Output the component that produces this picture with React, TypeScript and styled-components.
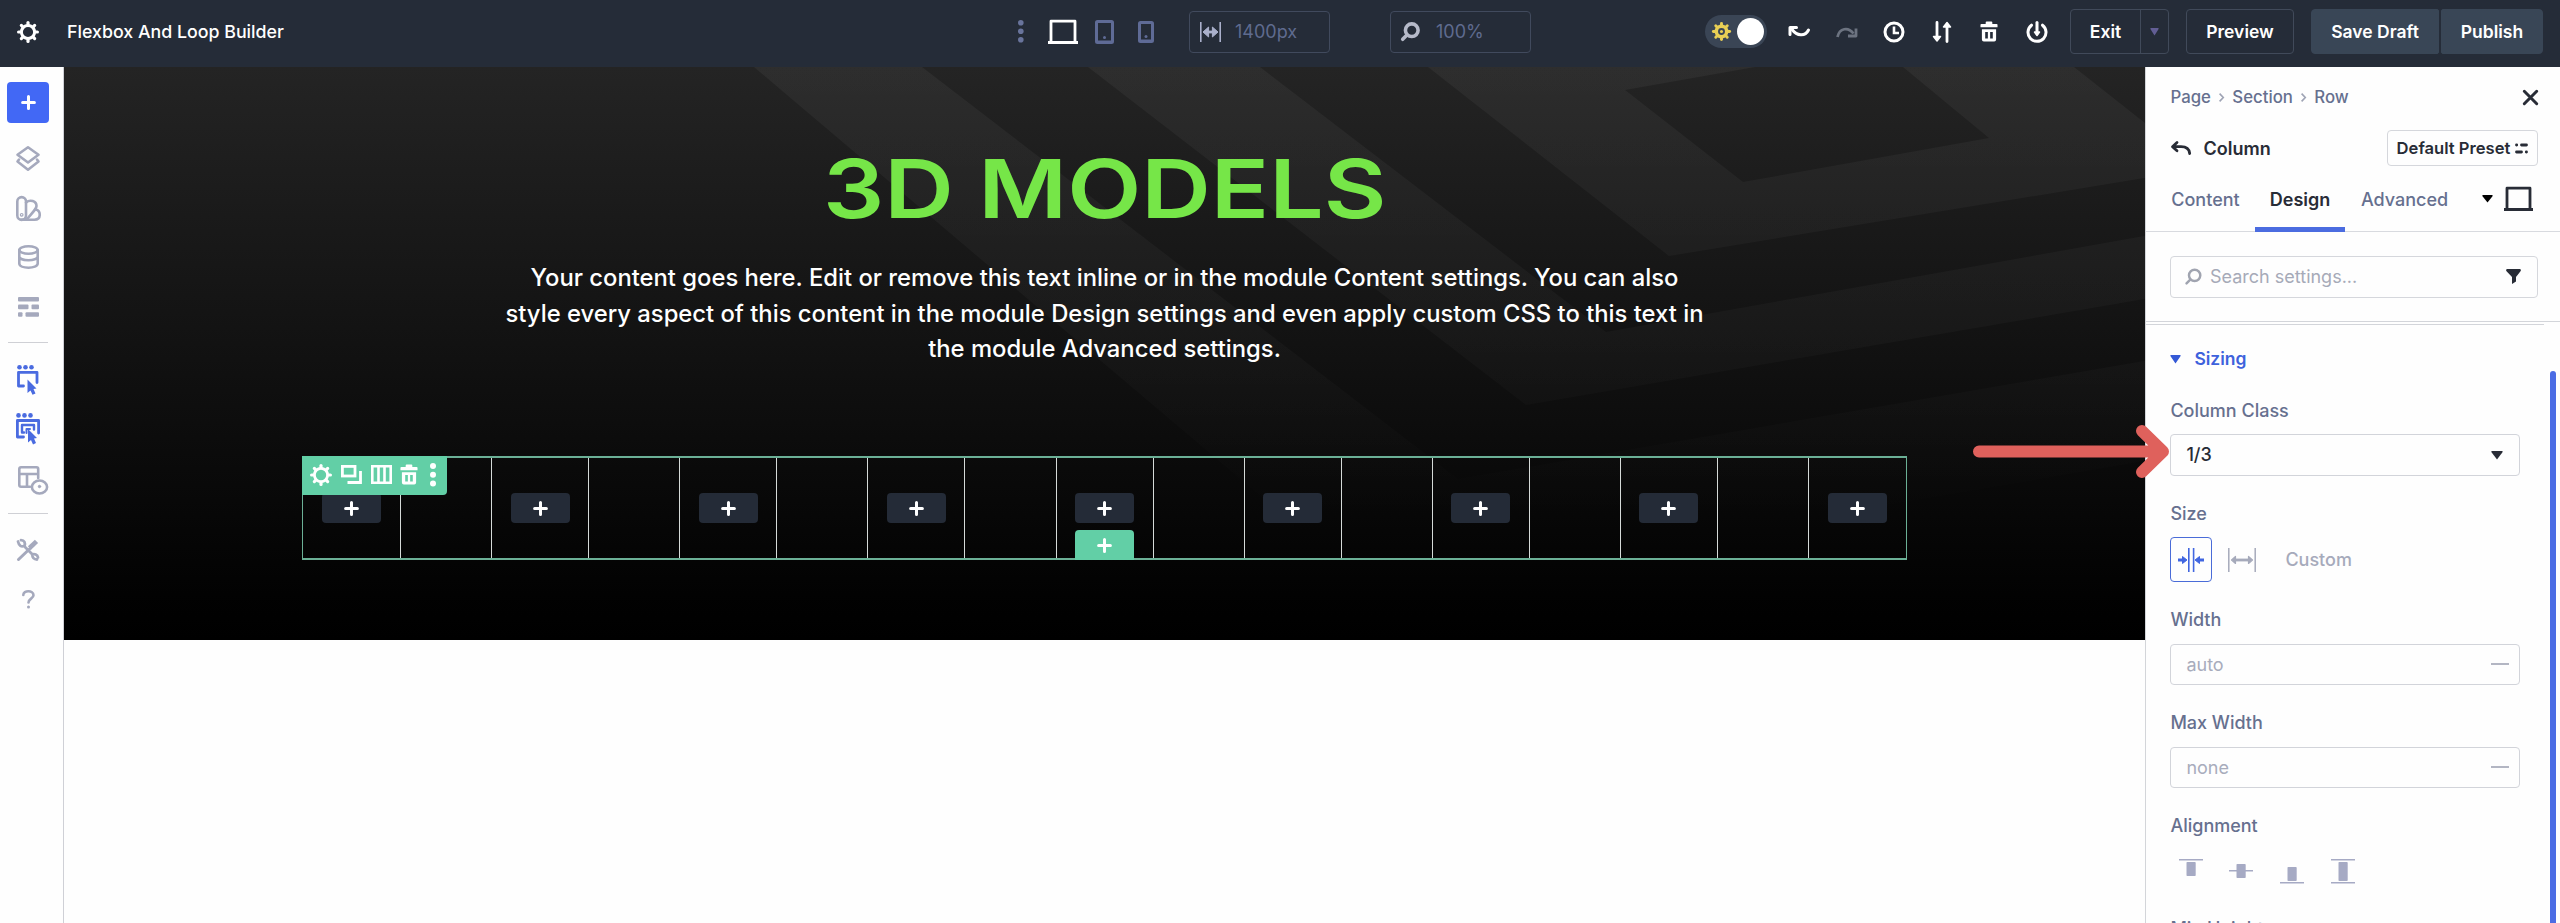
import React from "react";
import styled, { createGlobalStyle } from "styled-components";

const GlobalStyle = createGlobalStyle`
  * { box-sizing: border-box; }
  body { margin: 0; background: #fefefe; overflow: hidden; }
  #root { font-family: Inter, "Liberation Sans", sans-serif; }
  svg { display: block; flex: none; overflow: visible; }
  button { font: inherit; margin: 0; padding: 0; border: 0; background: none; }
`;

/* ---------- shell ---------- */
const Shell = styled.div`
  position: relative;
  width: 2560px;
  height: 923px;
  display: flex;
  flex-direction: column;
  overflow: hidden;
`;
const Header = styled.header`
  height: 67px;
  flex: none;
  display: flex;
  align-items: center;
  padding: 0 16px 4px 17px;
  background: #252c38;
  color: #fff;
  font-size: 18px;
  font-weight: 500;
`;
const Body = styled.div`
  flex: 1;
  min-height: 0;
  display: flex;
`;
const Spacer = styled.span<{ $w: number }>`
  flex: none;
  width: ${(p) => p.$w}px;
`;

/* ---------- header ---------- */
const HeaderLeft = styled.div`
  width: 1001px;
  display: flex;
  align-items: center;
  gap: 28px;
`;
const Title = styled.span<{ $size: number }>`
  font-size: ${(p) => p.$size}px;
`;
const Devices = styled.div`
  display: flex;
  align-items: center;
  width: 171px;
`;
const ValueBox = styled.div<{ $gap?: number }>`
  width: 141px;
  height: 42px;
  border: 1.5px solid #414a5d;
  border-radius: 4px;
  display: flex;
  align-items: center;
  gap: ${(p) => p.$gap ?? 14}px;
  padding-left: 10px;
  font-size: 18px;
  font-weight: 400;
  color: #5f6b8f;
`;
const Toggle = styled.div`
  width: 62px;
  height: 33px;
  border-radius: 17px;
  background: #3a4555;
  display: flex;
  align-items: center;
  justify-content: space-between;
  padding: 0 3px 0 7px;
`;
const Knob = styled.span`
  width: 27px;
  height: 27px;
  border-radius: 50%;
  background: #fff;
`;
const Actions = styled.div`
  display: grid;
  grid-template-columns: repeat(6, 22px);
  align-items: center;
  justify-items: center;
  justify-content: space-between;
  width: 260px;
  margin: 0 22px 0 21px;
`;
const SplitButton = styled.div`
  display: flex;
  width: 99px;
  height: 45px;
  border: 1.5px solid #414a5a;
  border-radius: 4px;
`;
const SplitMain = styled.button`
  flex: 1;
  color: #fff;
  font-weight: 600;
  font-size: 17.5px;
  border-right: 1.5px solid #414a5a;
`;
const SplitCaret = styled.button`
  width: 27px;
  display: grid;
  place-items: center;
`;
const HeaderButton = styled.button<{ $w: number; $filled?: boolean; $round: string }>`
  width: ${(p) => p.$w}px;
  height: 45px;
  color: #fff;
  font-size: 17.5px;
  font-weight: 600;
  border-radius: ${(p) => p.$round};
  border: 1.5px solid ${(p) => (p.$filled ? "#394656" : "#414a5a")};
  background: ${(p) => (p.$filled ? "#394656" : "transparent")};
`;

/* ---------- sidebar ---------- */
const Sidebar = styled.nav`
  width: 64px;
  border-right: 1.5px solid #cfd0d6;
  background: #fefefe;
  display: flex;
  flex-direction: column;
  align-items: center;
  padding: 15px 7px 0 0;
  color: #a5a9bd;
`;
const AddButton = styled.button`
  width: 42px;
  height: 41px;
  border-radius: 4px;
  background: #4268f5;
  color: #fff;
  display: grid;
  place-items: center;
  margin-bottom: 11px;
`;
const NavItem = styled.button<{ $active?: boolean; $h?: number }>`
  width: 42px;
  height: ${(p) => p.$h ?? 49.4}px;
  display: grid;
  place-items: center;
  color: ${(p) => (p.$active ? "#4a6be0" : "#a5a9bd")};
`;
const NavRule = styled.hr<{ $top?: number }>`
  width: 40px;
  height: 1.5px;
  border: 0;
  margin: ${(p) => p.$top ?? 9}px 0 12px;
  background: #cfd0d5;
`;

/* ---------- canvas ---------- */
const Canvas = styled.main`
  width: 2081px;
  background: #fefefe;
`;
const Hero = styled.section`
  position: relative;
  height: 573px;
  background: linear-gradient(#242424, #1a1a1a 26%, #0d0d0d 62%, #020202 92%, #000);
  color: #fff;
  display: flex;
  flex-direction: column;
  align-items: center;
`;
const HeroPattern = styled.svg`
  position: absolute;
  inset: 0;
`;
const HeroTitle = styled.h1`
  position: relative;
  margin: 77px 0 0;
  height: 90px;
  line-height: 90px;
  font-size: 81px;
  font-weight: 600;
  white-space: nowrap;
  color: #76e648;
  transform: scaleX(1.19);
`;
const HeroText = styled.p`
  position: relative;
  margin: 26px 0 0;
  font-size: 23.8px;
  line-height: 35.7px;
  text-align: center;
  font-weight: 500;
  white-space: nowrap;
`;
const TextLine = styled.span`
  display: block;
`;
const RowFrame = styled.div`
  position: relative;
  width: 1605px;
  height: 104px;
  margin-top: 89px;
  border: solid #6bb096;
  border-width: 2px 1px;
  display: flex;
  justify-content: space-between;
`;
const Column = styled.div`
  position: relative;
  width: 98px;
  border: solid #d5dad8;
  border-width: 0 1.5px;
  display: flex;
  flex-direction: column;
  align-items: center;
  padding-top: 35px;
  gap: 7px;
  &:first-child { border-left: 0; }
  &:nth-child(9) { border-right: 0; }
`;
const AddModule = styled.button`
  width: 59px;
  height: 30px;
  flex: none;
  border-radius: 4px;
  background: #242b37;
  display: grid;
  place-items: center;
`;
const AddRow = styled(AddModule)`
  background: #62cfa6;
  border-radius: 4px 4px 0 0;
`;
const RowTools = styled.div`
  position: absolute;
  z-index: 1;
  left: -1px;
  top: -2px;
  width: 145px;
  height: 39px;
  padding: 0 11px 2px 8px;
  border-radius: 0 0 4px 0;
  background: #62cfa6;
  display: flex;
  align-items: center;
  gap: 8.8px;
`;

/* ---------- settings panel ---------- */
const Panel = styled.aside`
  width: 415px;
  border-left: 1.5px solid #d3d5d9;
  background: #fefefe;
  font-size: 18px;
  font-weight: 500;
  color: #66708f;
  display: flex;
  flex-direction: column;
`;
const Crumbs = styled.div`
  display: flex;
  align-items: center;
  height: 24px;
  margin: 18px 22px 0 24.5px;
  font-size: 16.8px;
  gap: 8.2px;
`;
const Push = styled.span`
  margin-left: auto;
`;
const TitleRow = styled.div`
  display: flex;
  align-items: center;
  height: 36px;
  margin: 21px 22px 0 24.5px;
  gap: 13px;
  color: #282c36;
  font-size: 18px;
  font-weight: 600;
`;
const PresetButton = styled.button`
  margin-left: auto;
  width: 151px;
  height: 36px;
  border: 1.5px solid #d5d7dc;
  border-radius: 4px;
  display: flex;
  align-items: center;
  justify-content: center;
  gap: 5px;
  color: #282c36;
  font-size: 16.6px;
`;
const Tabs = styled.div`
  display: flex;
  height: 65.5px;
  border-bottom: 1.5px solid #d8dadf;
  padding-left: 10px;
  font-size: 18px;
`;
const Tab = styled.button<{ $w: number; $active?: boolean }>`
  width: ${(p) => p.$w}px;
  height: 66px;
  padding-top: ${(p) => (p.$active ? 6 : 1)}px;
  border-bottom: ${(p) => (p.$active ? "5px solid #4b6ce0" : "0")};
  color: ${(p) => (p.$active ? "#282c36" : "#66708f")};
  font-weight: ${(p) => (p.$active ? 600 : 500)};
`;
const TabDevice = styled.div`
  display: flex;
  align-items: center;
  gap: 11px;
  margin-left: auto;
  padding: 1px 27px 0 0;
`;
const SearchBox = styled.div`
  height: 42px;
  margin: 24px 22px 23px 24px;
  border: 1.5px solid #d5d7dc;
  border-radius: 4px;
  display: flex;
  align-items: center;
  padding: 0 16px 0 14px;
  gap: 8px;
  color: #a6aab8;
  font-size: 18px;
  font-weight: 400;
`;
const Scroll = styled.div`
  position: relative;
  flex: 1;
  min-height: 0;
  overflow: hidden;
  border-top: 1.5px solid #d3d5da;
`;
const ScrollThumb = styled.div`
  position: absolute;
  right: 4px;
  top: 49px;
  bottom: -6px;
  width: 6px;
  border-radius: 3px;
  background: #4b6ce4;
`;
const Group = styled.div`
  margin-top: 2px;
  width: 398px;
  border-top: 1.5px solid #d3d5da;
  padding: 20px 0 0 24.4px;
`;
const GroupTitle = styled.div`
  display: flex;
  align-items: center;
  gap: 13px;
  height: 28px;
  color: #3e62dc;
  font-weight: 600;
  font-size: 17.5px;
`;
const Field = styled.div<{ $top?: number }>`
  margin-top: ${(p) => p.$top ?? 26}px;
`;
const Label = styled.div`
  height: 24px;
  line-height: 24px;
  font-size: 18px;
`;
const Input = styled.div<{ $dark?: boolean }>`
  width: 350px;
  height: 41.5px;
  margin-top: 11.5px;
  border: 1.5px solid #d2d4da;
  border-radius: 4px;
  display: flex;
  align-items: center;
  justify-content: space-between;
  padding: 0 ${(p) => (p.$dark ? 16 : 10)}px 0 15px;
  color: ${(p) => (p.$dark ? "#282c36" : "#a8acbc")};
  font-size: 18px;
  font-weight: ${(p) => (p.$dark ? 500 : 400)};
`;
const Dash = styled.span`
  width: 18px;
  height: 2px;
  background: #b3b6c3;
`;
const SizeOptions = styled.div`
  display: flex;
  align-items: center;
  height: 45px;
  margin-top: 11.5px;
  color: #a6aabb;
`;
const SizeOption = styled.button<{ $active?: boolean }>`
  width: 42px;
  height: 45px;
  border: ${(p) => (p.$active ? "1.5px solid #4a6cd8" : "0")};
  border-radius: 4px;
  display: grid;
  place-items: center;
  color: ${(p) => (p.$active ? "#4166e0" : "#a6aabb")};
`;
const AlignOptions = styled.div`
  display: flex;
  gap: 26.6px;
  margin: 20.5px 0 0 8.5px;
`;
const ArrowOverlay = styled.svg`
  position: absolute;
  left: 1969px;
  top: 420px;
  pointer-events: none;
`;

/* ---------- icons ---------- */
const Gear = ({ size = 22, color = "#fff", w = 3 }: { size?: number; color?: string; w?: number }) => (
  <svg width={size} height={size} viewBox="-11 -11 22 22" fill="none" stroke={color}>
    <circle r="6.6" strokeWidth={w} />
    {[0, 45, 90, 135, 180, 225, 270, 315].map((a) => (
      <path key={a} d="M0-7.4V-9.4" strokeWidth="3.2" strokeLinecap="round" transform={`rotate(${a})`} />
    ))}
  </svg>
);
const Sun = () => (
  <svg width="19" height="19" viewBox="-11 -11 22 22" fill="none" stroke="#e9cf55">
    <circle r="6" strokeWidth="4" />
    <circle r="1.800" fill="#e9cf55" stroke="none" />
    {[0, 45, 90, 135, 180, 225, 270, 315].map((a) => (
      <path key={a} d="M0-7.4V-9.4" strokeWidth="3.4" strokeLinecap="round" transform={`rotate(${a})`} />
    ))}
  </svg>
);
const Plus = ({ s = 15 }: { s?: number }) => (
  <svg width={s} height={s} viewBox="0 0 15 15" stroke="#fff" strokeWidth="3" strokeLinecap="round">
    <path d="M7.5 1.6v11.8M1.6 7.5h11.8" />
  </svg>
);
const Dots = ({ color, r = 2.8, gap = 8.5 }: { color: string; r?: number; gap?: number }) => (
  <svg width={2 * r} height={2 * (gap + r)} fill={color}>
    {[0, 1, 2].map((i) => (
      <circle key={i} cx={r} cy={r + i * gap} r={r} />
    ))}
  </svg>
);
const Laptop = ({ color, w = 30, h = 25 }: { color: string; w?: number; h?: number }) => (
  <svg width={w} height={h} fill="none" stroke={color}>
    <path d={`M3 ${h - 2}V2.2H${w - 3}V${h - 2}`} strokeWidth="2.8" strokeLinejoin="round" />
    <path d={`M0 ${h - 1.5}H${w}`} strokeWidth="3" />
  </svg>
);
const Phone = ({ w, h }: { w: number; h: number }) => (
  <svg width={w} height={h} fill="none" stroke="#5f6b96">
    <rect x="1.5" y="1.5" width={w - 3} height={h - 3} rx="1" strokeWidth="3" />
    <path d={`M2 ${h - 2}H${w - 2}`} strokeWidth="3" />
    <circle cx={w / 2} cy={h - 6.5} r="1.5" fill="#5f6b96" stroke="none" />
  </svg>
);
const Search = ({ size = 18, color, w = 3.2 }: { size?: number; color: string; w?: number }) => (
  <svg width={size} height={size} viewBox="0 0 18 18" fill="none" stroke={color} strokeWidth={w}>
    <circle cx="10.2" cy="7.8" r="6" />
    <path d="M5.6 12.4 1.6 16.4" strokeLinecap="round" />
  </svg>
);
const Caret = ({ w = 11, h = 7, color = "#282c36" }: { w?: number; h?: number; color?: string }) => (
  <svg width={w} height={h} fill={color}>
    <path d={`M.8 0H${w - 0.8}Q${w + 0.2} .2 ${w - 0.7} 1.5L${w / 2} ${h}.6L.7 1.5Q-.2 .2 .8 0Z`} />
  </svg>
);
const WidthIcon = () => (
  <svg width="21" height="20" viewBox="0 0 21 20" fill="#aab0cb" stroke="#aab0cb">
    <path d="M.8 0V20M20.2 0V20" strokeWidth="1.6" fill="none" />
    <path d="M6 10h9" strokeWidth="2.8" />
    <path d="M3 10 8.6 5v10ZM18 10 12.4 5v10Z" strokeWidth="1" strokeLinejoin="round" />
  </svg>
);
const Undo = ({ redo }: { redo?: boolean }) =>
  redo ? (
    <svg width="22" height="14" viewBox="0 0 22 14" fill="none" stroke="#6c7380" strokeWidth="2.8" strokeLinejoin="round">
      <path d="M1.5 12C3.5 3 12 1.500 17.500 8.500" />
      <path d="M20 3.500V11H12" />
    </svg>
  ) : (
    <svg width="22" height="14" viewBox="0 0 22 14" fill="none" stroke="#fff" strokeWidth="3" strokeLinejoin="round" strokeLinecap="round">
      <path d="M4 4.500C9 11 17 12 20.500 5" />
      <path d="M2 9.500V2.500H8.500" />
    </svg>
  );
const Clock = () => (
  <svg width="22" height="22" viewBox="0 0 22 22" fill="none" stroke="#fff" strokeWidth="3">
    <circle cx="11" cy="11" r="9" />
    <path d="M11 5.500V12h5" strokeWidth="2.6" />
  </svg>
);
const Sort = () => (
  <svg width="20" height="22" viewBox="0 0 20 22" fill="#fff" stroke="#fff" strokeLinejoin="round" strokeLinecap="round">
    <path d="M5 1.500V16M15 6v14.500" strokeWidth="2.800" />
    <path d="M1.500 15.500h7L5 20ZM11.500 6h7L15 1.500Z" strokeWidth="1.500" />
  </svg>
);
const Trash = () => (
  <svg width="18" height="21" viewBox="0 0 19 21" fill="#fff">
    <path d="M6 2.500V1Q6 0 7 0h5q1 0 1 1v1.500h4.500q1 0 1 1V6H.500V3.500q0-1 1-1Z" />
    <path fillRule="evenodd" d="M2 8h15v11q0 2-2 2H4q-2 0-2-2ZM5.500 11v7h2.800v-7ZM10.700 11v7h2.800v-7Z" />
  </svg>
);
const Power = () => (
  <svg width="22" height="22" viewBox="0 0 22 22" fill="none" stroke="#fff" strokeWidth="3" strokeLinecap="round">
    <path d="M5.500 4.200a9 9 0 1 0 11 0" />
    <path d="M11 1.500V12" />
    <path d="M8.500 11h5L11 14.500Z" fill="#fff" strokeWidth="1.500" strokeLinejoin="round" />
  </svg>
);
const line = { fill: "none", stroke: "currentColor", strokeWidth: 2.6, strokeLinejoin: "round", strokeLinecap: "round" } as const;
const Layers = () => (
  <svg width="24" height="25" viewBox="0 0 24 25" {...line}>
    <path d="M12 1.300 22.500 8.700 12 16.500 1.500 8.700Z" />
    <path d="M3 13.500 1.500 15.500 12 23.700 22.500 15.500 21 13.500" />
  </svg>
);
const Swatches = () => (
  <svg width="25" height="25" viewBox="0 0 25 25" {...line}>
    <path d="M1.300 5.500a4 4 0 0 1 8.700 0V19.500a4.300 4.300 0 0 1-8.700 0Z" />
    <path d="M10 6.500C14 3 20.500 5 20.500 10 20.500 12 19.500 13.500 11 23" />
    <path d="M20 13.500c5 1.500 5.500 10.200-1.500 10.200H5.500" />
    <circle cx="5.700" cy="18.800" r=".6" />
  </svg>
);
const Database = () => (
  <svg width="21" height="24" viewBox="0 0 21 24" {...line}>
    <ellipse cx="10.500" cy="5" rx="9.200" ry="3.700" />
    <path d="M1.300 5v13.500c0 5.600 18.400 5.600 18.400 0V5M1.300 11.500c0 5 18.400 5 18.400 0" />
  </svg>
);
const Wireframe = () => (
  <svg width="21" height="20" viewBox="0 0 21 20" fill="currentColor">
    <rect width="21" height="4.600" rx="1" />
    <rect y="7.600" width="10.500" height="4.600" rx="1" />
    <rect x="13.500" y="7.600" width="7.500" height="4.600" rx="1" />
    <rect y="15.200" width="4.500" height="4.600" rx="1" />
    <rect x="7.500" y="15.200" width="13.500" height="4.600" rx="1" />
  </svg>
);
const Pointer = "M10.500 14.500 19.500 23.500 16.500 24 18.500 28.500 15.500 29.800 13.500 25.500 10.500 28Z";
const SelectBox = () => (
  <svg width="22" height="30" viewBox="0 0 22 30" {...line}>
    <g fill="currentColor" stroke="none">
      <circle cx="2.500" cy="2.300" r="2.300" /><circle cx="8.500" cy="2.300" r="2.300" /><circle cx="14.500" cy="2.300" r="2.300" />
      <path d={Pointer} />
    </g>
    <path d="M6.500 21H1.500V7.300H20V17.500" strokeWidth="2.800" />
  </svg>
);
const SelectNested = () => (
  <svg width="24" height="32" viewBox="0 0 24 32" {...line}>
    <g fill="currentColor" stroke="none">
      <circle cx="2.500" cy="2.400" r="2.300" /><circle cx="8.500" cy="2.400" r="2.300" /><circle cx="14.500" cy="2.400" r="2.300" />
      <path d={Pointer} transform="translate(1.500 1.600)" />
    </g>
    <path d="M7.500 24H1.400V7.500H22.600V20" strokeWidth="2.800" />
    <path d="M8 19.500H6V12H18V16.500" strokeWidth="2.400" />
    <path d="M10.500 20V16H14" strokeWidth="2" />
  </svg>
);
const GridEye = () => (
  <svg width="21" height="28" viewBox="0 0 21 28" {...line}>
    <path d="M12 20.700H3Q1.300 20.700 1.300 19V3Q1.300 1.300 3 1.300H18.500Q20.200 1.300 20.200 3V12M1.300 8H20.200M9 8V20.700" />
    <ellipse cx="21.500" cy="21" rx="7.600" ry="6.500" />
    <circle cx="21.500" cy="20.500" r="1.200" fill="currentColor" strokeWidth="1" />
  </svg>
);
const Tools = () => (
  <svg width="22" height="22" viewBox="0 0 22 22" {...line}>
    <path d="M1 2.500C2 7 4.500 8 7 7L15.500 15.500C15 18.500 17 20.500 20 20.500M4 1.200C7.500 1.200 8.500 4 7.500 7M15 15.500C17.500 14.500 20.500 15.500 21 18.500" strokeWidth="2.800" />
    <path d="M1.500 20.500 13 9.500" strokeWidth="3" />
    <path d="M12.500 9 19.500 2.300" strokeWidth="4.600" strokeLinecap="butt" />
  </svg>
);
const Help = () => (
  <svg width="13" height="19" viewBox="0 0 13 19" {...line}>
    <path d="M1.300 5C1.300 0 11.500 0 11.500 5.200 11.500 8.500 6.500 8.800 6.500 12.500" strokeWidth="2.600" />
    <circle cx="6.500" cy="17" r="1.500" fill="currentColor" stroke="none" />
  </svg>
);
const Duplicate = () => (
  <svg width="21" height="19" viewBox="0 0 21 19" fill="none" stroke="#fff" strokeWidth="2.800">
    <rect x="1.400" y="1.400" width="12.600" height="9.600" />
    <path d="M19.500 6V17.500H6.500" />
  </svg>
);
const ColumnsIcon = () => (
  <svg width="21" height="19" viewBox="0 0 21 19" fill="none" stroke="#fff" strokeWidth="2.600">
    <path d="M1.300 1.300H19.700V17.700H1.300ZM7.500 1.300V17.700M13.500 1.300V17.700" />
  </svg>
);
const Close = () => (
  <svg width="15" height="15" viewBox="0 0 15 15" stroke="#282c36" strokeWidth="3" strokeLinecap="round">
    <path d="M1.300 1.300 13.700 13.700M13.700 1.300 1.300 13.700" />
  </svg>
);
const Back = () => (
  <svg width="20" height="14" viewBox="0 0 20 14" fill="none" stroke="#282c36" strokeWidth="2.800" strokeLinecap="round" strokeLinejoin="round">
    <path d="M6 1.500 1.500 5.700 6 9.800M2 5.700H10Q18 5.700 18.700 12.500" />
  </svg>
);
const PresetIcon = () => (
  <svg width="13" height="11" viewBox="0 0 13 11" stroke="#282c36" strokeWidth="2.800" strokeLinecap="round">
    <path d="M1.500 2h.2M6.500 2h5M1.500 9h5M11.300 9h.2" />
  </svg>
);
const Filter = () => (
  <svg width="15" height="15" viewBox="0 0 15 15" fill="#282c36">
    <path d="M.8 0H14.200Q15.400 .8 14.700 2L10 8V12.500L6 15V8L.300 2Q-.4 .8 .8 0Z" />
  </svg>
);
const Chevron = () => (
  <svg width="5" height="9" viewBox="0 0 5 9" fill="none" stroke="#9ea3b4" strokeWidth="1.600">
    <path d="M.6 .6 4.300 4.500 .6 8.400" />
  </svg>
);
const SizeIn = () => (
  <svg width="26" height="24" viewBox="0 0 26 24" fill="currentColor" stroke="currentColor">
    <path d="M10.800 0V24M15.600 0V24" strokeWidth="1.600" />
    <path d="M0 12H5M21 12H26" strokeWidth="3" />
    <path d="M4.500 8.500 9 12 4.500 15.500ZM21.500 8.500 17 12 21.500 15.500Z" strokeWidth="1" strokeLinejoin="round" />
  </svg>
);
const SizeOut = () => (
  <svg width="28" height="24" viewBox="0 0 28 24" fill="currentColor" stroke="currentColor">
    <path d="M.8 0V24M27.200 0V24" strokeWidth="1.500" />
    <path d="M6 12H22" strokeWidth="2.800" />
    <path d="M3.500 12 7.500 8.500V15.500ZM24.500 12 20.500 8.500V15.500Z" strokeWidth="1.200" strokeLinejoin="round" />
  </svg>
);
const AlignIcon = ({ lines, y, h }: { lines: number[]; y: number; h: number }) => (
  <svg width="24" height="25" viewBox="0 0 24 25" fill="#a6aac4">
    {lines.map((l) => (
      <rect key={l} y={l} width="24" height="1.500" />
    ))}
    <rect x="7.500" y={y} width="9.200" height={h} rx=".8" />
  </svg>
);

const columns = Array.from({ length: 9 }, (_, i) => i);

export default function App() {
  return (
    <Shell>
      <GlobalStyle />
      <Header>
        <HeaderLeft>
          <Gear />
          <Title $size={17.8}>Flexbox And Loop Builder</Title>
        </HeaderLeft>
        <Devices>
          <Dots color="#69749c" />
          <Spacer $w={24} />
          <Laptop color="#fff" />
          <Spacer $w={17} />
          <Phone w={19} h={24} />
          <Spacer $w={24} />
          <Phone w={16} h={22} />
        </Devices>
        <ValueBox>
          <WidthIcon />
          1400px
        </ValueBox>
        <Spacer $w={60} />
        <ValueBox $gap={16}>
          <Search color="#b6bac9" size={19} w={3.4} />
          <span>100%</span>
        </ValueBox>
        <Spacer $w={174} />
        <Toggle>
          <Sun />
          <Knob />
        </Toggle>
        <Actions>
          <Undo />
          <Undo redo />
          <Clock />
          <Sort />
          <Trash />
          <Power />
        </Actions>
        <SplitButton>
          <SplitMain>Exit</SplitMain>
          <SplitCaret>
            <Caret w={9} h={7} color="#625e94" />
          </SplitCaret>
        </SplitButton>
        <Spacer $w={17} />
        <HeaderButton $w={108} $round="4px">Preview</HeaderButton>
        <Spacer $w={17} />
        <HeaderButton $w={128} $filled $round="4px 2px 2px 4px">Save Draft</HeaderButton>
        <Spacer $w={2} />
        <HeaderButton $w={102} $filled $round="2px 4px 4px 2px">Publish</HeaderButton>
      </Header>

      <Body>
        <Sidebar>
          <AddButton><Plus /></AddButton>
          <NavItem><Layers /></NavItem>
          <NavItem><Swatches /></NavItem>
          <NavItem><Database /></NavItem>
          <NavItem><Wireframe /></NavItem>
          <NavRule $top={10} />
          <NavItem $active $h={49}><SelectBox /></NavItem>
          <NavItem $active $h={49}><SelectNested /></NavItem>
          <NavItem $h={53}>
            <GridEye />
          </NavItem>
          <NavRule $top={6.5} />
          <NavItem $h={48}><Tools /></NavItem>
          <NavItem $h={50}><Help /></NavItem>
        </Sidebar>

        <Canvas>
          <Hero>
            <HeroPattern width="2081" height="573" viewBox="64 67 2081 573">
              <defs>
                <linearGradient id="band" x1="0" y1="67" x2="0" y2="520" gradientUnits="userSpaceOnUse">
                  <stop offset="0" stopColor="#fff" stopOpacity=".045" />
                  <stop offset=".6" stopColor="#fff" stopOpacity=".025" />
                  <stop offset="1" stopColor="#fff" stopOpacity="0" />
                </linearGradient>
              </defs>
              <g fill="url(#band)">
                <path d="M754 67H922L1458 479 2150 360V460L1375 593Z" />
                <path d="M1088 67H1260L1606 332 2150 235V298L1526 405Z" />
                <path fillRule="evenodd" d="M1428 67H1755L1625 90 1743 182 1989 138 1903 67H2074L2150 127V177L1669 256Z" />
              </g>
            </HeroPattern>
            <HeroTitle>3D MODELS</HeroTitle>
            <HeroText>
              <TextLine>Your content goes here. Edit or remove this text inline or in the module Content settings. You can also </TextLine>
              <TextLine>style every aspect of this content in the module Design settings and even apply custom CSS to this text in </TextLine>
              <TextLine>the module Advanced settings.</TextLine>
            </HeroText>
            <RowFrame>
              {columns.map((i) => (
                <Column key={i}>
                  <AddModule><Plus /></AddModule>
                  {i === 4 && <AddRow><Plus /></AddRow>}
                </Column>
              ))}
              <RowTools>
                <Gear w={2.8} />
                <Duplicate />
                <ColumnsIcon />
                <Trash />
                <Push><Dots color="#fff" r={3} gap={8.8} /></Push>
              </RowTools>
            </RowFrame>
          </Hero>
        </Canvas>

        <Panel>
          <Crumbs>
            <span>Page</span><Chevron /><span>Section</span><Chevron /><span>Row</span>
            <Push><Close /></Push>
          </Crumbs>
          <TitleRow>
            <Back />
            <span>Column</span>
            <PresetButton>Default Preset<PresetIcon /></PresetButton>
          </TitleRow>
          <Tabs>
            <Tab $w={99}>Content</Tab>
            <Tab $w={90} $active>Design</Tab>
            <Tab $w={119}>Advanced</Tab>
            <TabDevice>
              <Caret color="#000" />
              <Laptop color="#282c36" w={29} h={25} />
            </TabDevice>
          </Tabs>
          <SearchBox>
            <Search color="#a0a4b0" size={17} w={2.6} />
            Search settings...
            <Push><Filter /></Push>
          </SearchBox>
          <Scroll>
            <Group>
              <GroupTitle><Caret color="#3459d6" h={8} />Sizing</GroupTitle>
              <Field>
                <Label>Column Class</Label>
                <Input $dark>1/3<Caret w={12} h={8} /></Input>
              </Field>
              <Field>
                <Label>Size</Label>
                <SizeOptions>
                  <SizeOption $active><SizeIn /></SizeOption>
                  <Spacer $w={9} />
                  <SizeOption><SizeOut /></SizeOption>
                  <Spacer $w={22} />
                  Custom
                </SizeOptions>
              </Field>
              <Field>
                <Label>Width</Label>
                <Input>auto<Dash /></Input>
              </Field>
              <Field>
                <Label>Max Width</Label>
                <Input>none<Dash /></Input>
              </Field>
              <Field>
                <Label>Alignment</Label>
                <AlignOptions>
                  <AlignIcon lines={[0]} y={3} h={14} />
                  <AlignIcon lines={[11]} y={5} h={14} />
                  <AlignIcon lines={[23]} y={8} h={14} />
                  <AlignIcon lines={[0, 23]} y={3} h={19} />
                </AlignOptions>
              </Field>
              <Field $top={33.5}>
                <Label>Min Height</Label>
              </Field>
            </Group>
            <ScrollThumb />
          </Scroll>
        </Panel>
      </Body>

      <ArrowOverlay width="205" height="64" fill="none" stroke="#df615c" strokeWidth="12" strokeLinecap="round" strokeLinejoin="round">
        <path d="M10 31.500H190M173 11 194 31.500 173 52" />
      </ArrowOverlay>
    </Shell>
  );
}
